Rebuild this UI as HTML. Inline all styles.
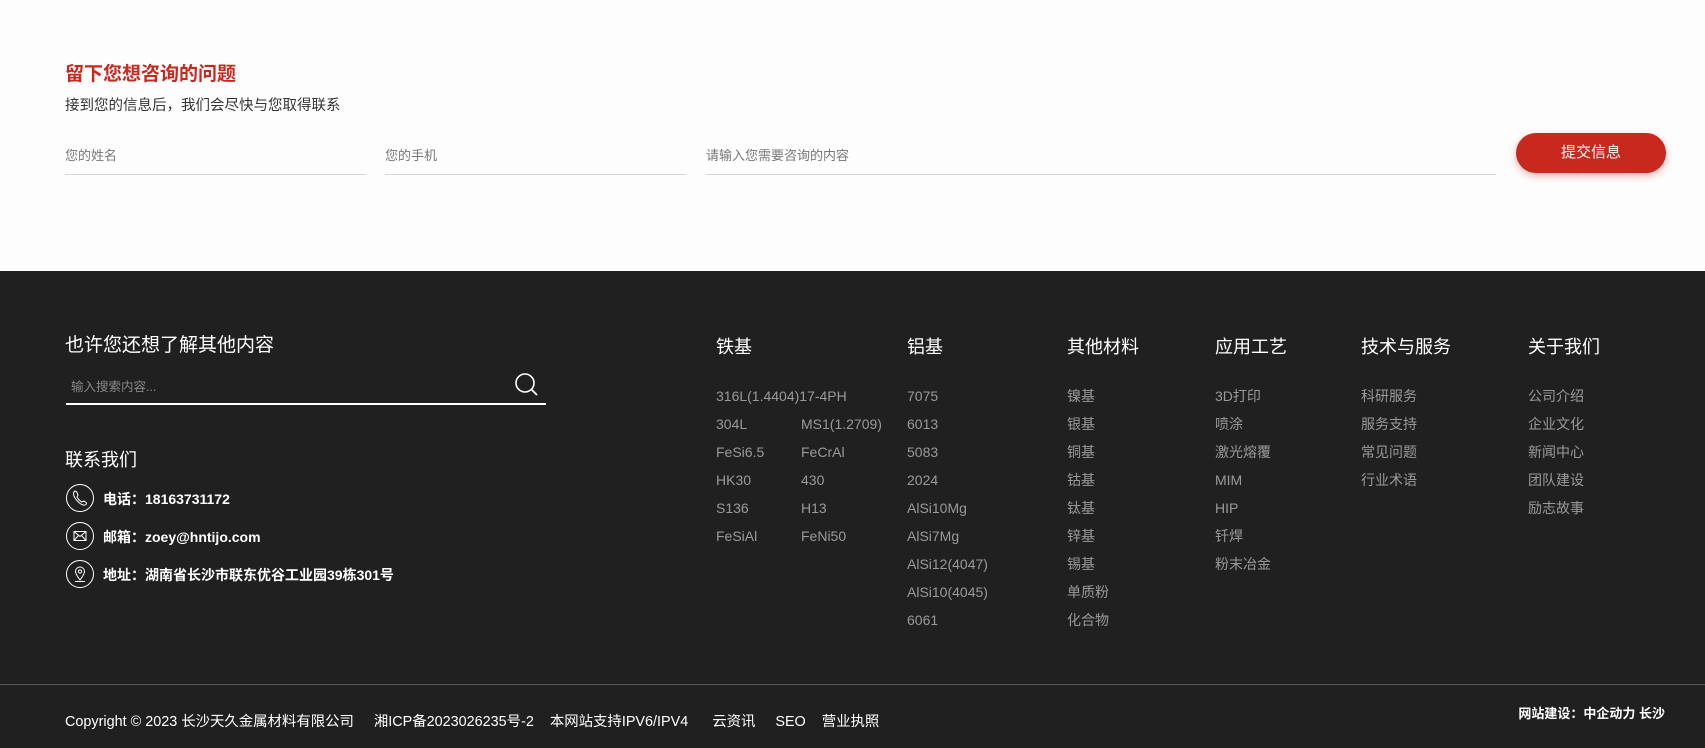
<!DOCTYPE html>
<html><head><meta charset="utf-8"><style>
*{margin:0;padding:0;box-sizing:border-box}
body{width:1705px;height:748px;overflow:hidden;background:#fdfdfd;font-family:"Liberation Sans","Noto Sans CJK SC",sans-serif;position:relative}
.a{position:absolute;white-space:nowrap}
.t1{left:65px;top:59px;font-size:19px;font-weight:bold;color:#c8281e}
.t2{left:65px;top:94px;font-size:14.5px;color:#333}
.in{position:absolute;top:145px;height:30px;border-bottom:1px solid #d5d5d5;font-size:13px;color:#777}
.btn{position:absolute;left:1516px;top:133px;width:150px;height:40px;border-radius:20px;background:#c8281e;color:#fff;font-size:15px;text-align:center;line-height:40px;box-shadow:0 3px 8px rgba(200,40,30,.35)}
.ft{position:absolute;left:0;top:271px;width:1705px;height:477px;background:#202020}
.h{font-size:18px;color:#fff}
.it{font-size:14px;color:#9a9a9a;line-height:28px}
.ic{position:absolute;left:66px;width:28px;height:28px;border:1.3px solid #fff;border-radius:50%}
.ct{left:103px;font-size:14px;color:#fff;font-weight:600}
</style></head><body>
<div class="a t1">留下您想咨询的问题</div>
<div class="a t2">接到您的信息后，我们会尽快与您取得联系</div>
<div class="in" style="left:65px;width:301px">您的姓名</div>
<div class="in" style="left:385px;width:301px">您的手机</div>
<div class="in" style="left:706px;width:790px">请输入您需要咨询的内容</div>
<div class="btn">提交信息</div>
<div class="ft"></div>
<div class="a h" style="left:65px;top:330px;font-size:19px">也许您还想了解其他内容</div>
<div class="a" style="left:71px;top:376px;font-size:12.5px;color:#888">输入搜索内容...</div>
<svg class="a" style="left:514px;top:372px" width="26" height="26" viewBox="0 0 26 26"><circle cx="11" cy="11" r="9" fill="none" stroke="#fff" stroke-width="1.6"/><path d="M17.5 17.5 L23 23" stroke="#fff" stroke-width="1.8"/></svg>
<div class="a" style="left:66px;top:403px;width:480px;height:1.5px;background:#fff"></div>
<div class="a h" style="left:65px;top:446px">联系我们</div>
<div class="ic" style="top:484px"><svg width="26" height="26" viewBox="0 0 26 26"><path d="M8 6 C6 7 6 10 8 13 C10 16 13 19 16 20 C18 20.5 19.5 19.5 19.5 18 L17 16 L15 17 C13 16 11 14 10 12 L11 10 L9.5 6.5 Z" fill="none" stroke="#fff" stroke-width="1"/></svg></div>
<div class="a ct" style="top:489px">电话：18163731172</div>
<div class="ic" style="top:522px"><svg width="26" height="26" viewBox="0 0 26 26"><rect x="7" y="8.5" width="12" height="9" fill="none" stroke="#fff" stroke-width="1"/><path d="M7 8.5 L13 13.5 L19 8.5 M7 17.5 L11.5 12.5 M19 17.5 L14.5 12.5" fill="none" stroke="#fff" stroke-width="1"/></svg></div>
<div class="a ct" style="top:527px">邮箱：zoey@hntijo.com</div>
<div class="ic" style="top:560px"><svg width="26" height="26" viewBox="0 0 26 26"><path d="M13 19 C10 15 8.5 12.5 8.5 10.5 A4.5 4.5 0 0 1 17.5 10.5 C17.5 12.5 16 15 13 19 Z" fill="none" stroke="#fff" stroke-width="1"/><circle cx="13" cy="10.5" r="1.6" fill="none" stroke="#fff" stroke-width="1"/><path d="M8 20.5 H18" stroke="#fff" stroke-width="1"/></svg></div>
<div class="a ct" style="top:565px">地址：湖南省长沙市联东优谷工业园39栋301号</div>

<div class="a h" style="left:716px;top:333px">铁基</div>
<div class="a it" style="left:716px;top:382px">316L(1.4404)17-4PH<br>304L<br>FeSi6.5<br>HK30<br>S136<br>FeSiAl</div>
<div class="a it" style="left:801px;top:410px">MS1(1.2709)<br>FeCrAl<br>430<br>H13<br>FeNi50</div>
<div class="a h" style="left:907px;top:333px">铝基</div>
<div class="a it" style="left:907px;top:382px">7075<br>6013<br>5083<br>2024<br>AlSi10Mg<br>AlSi7Mg<br>AlSi12(4047)<br>AlSi10(4045)<br>6061</div>
<div class="a h" style="left:1067px;top:333px">其他材料</div>
<div class="a it" style="left:1067px;top:382px">镍基<br>银基<br>铜基<br>钴基<br>钛基<br>锌基<br>锡基<br>单质粉<br>化合物</div>
<div class="a h" style="left:1215px;top:333px">应用工艺</div>
<div class="a it" style="left:1215px;top:382px">3D打印<br>喷涂<br>激光熔覆<br>MIM<br>HIP<br>钎焊<br>粉末冶金</div>
<div class="a h" style="left:1361px;top:333px">技术与服务</div>
<div class="a it" style="left:1361px;top:382px">科研服务<br>服务支持<br>常见问题<br>行业术语</div>
<div class="a h" style="left:1528px;top:333px">关于我们</div>
<div class="a it" style="left:1528px;top:382px">公司介绍<br>企业文化<br>新闻中心<br>团队建设<br>励志故事</div>

<div class="a" style="left:0;top:684px;width:1705px;height:1px;background:#5a5a5a"></div>
<div class="a" style="left:65px;top:710px;font-size:14.4px;color:#fff">Copyright © 2023 长沙天久金属材料有限公司 &nbsp;&nbsp;&nbsp; 湘ICP备2023026235号-2 &nbsp;&nbsp; 本网站支持IPV6/IPV4 &nbsp;&nbsp;&nbsp;&nbsp; 云资讯 &nbsp;&nbsp;&nbsp; SEO &nbsp;&nbsp; 营业执照</div>
<div class="a" style="right:40px;top:703px;font-size:13px;color:#fff;font-weight:600">网站建设：中企动力 长沙</div>
</body></html>
